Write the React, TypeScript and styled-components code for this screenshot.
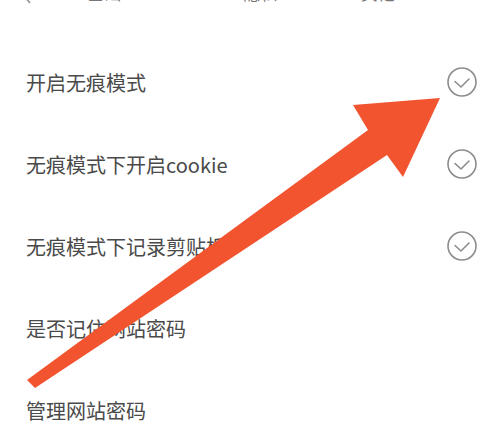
import React from 'react';
import styled, { createGlobalStyle } from 'styled-components';

const GlobalStyle = createGlobalStyle`
  html, body {
    margin: 0;
    padding: 0;
    background: #ffffff;
  }
  body {
    font-family: "Noto Sans CJK SC", "Noto Sans", sans-serif;
  }
`;

const tabs = [
  { label: '基础', offset: 55 },
  { label: '隐私', offset: 122 },
  { label: '其他', offset: 84 },
];

const rows = [
  { label: '开启无痕模式', checked: true },
  { label: '无痕模式下开启cookie', checked: true },
  { label: '无痕模式下记录剪贴板', checked: true },
  { label: '是否记住网站密码', checked: false },
  { label: '管理网站密码', checked: false },
];

function CheckCircle() {
  return (
    <svg width="30" height="30" viewBox="0 0 30 30">
      <circle cx="15" cy="15" r="14" fill="none" stroke="#8c8c8c" strokeWidth="1.6" />
      <path d="M8 14.5 L14 20 L22 12" fill="none" stroke="#8c8c8c" strokeWidth="1.6" strokeLinecap="round" strokeLinejoin="round" />
    </svg>
  );
}

function Arrow() {
  return (
    <ArrowLayer viewBox="0 0 493 442">
      <polygon
        points="27,380 368,130 353,105 440,98 403,177 387,155 35,388"
        fill="#f25430"
      />
    </ArrowLayer>
  );
}

function App() {
  return (
    <Page>
      <GlobalStyle />
      <TabBar>
        <Back>
          <svg width="10" height="16" viewBox="0 0 10 16">
            <path d="M8 1 L2 8 L8 15" fill="none" stroke="#9a9a9a" strokeWidth="1.8" />
          </svg>
        </Back>
        {tabs.map((t) => (
          <Tab key={t.label} $offset={t.offset}>{t.label}</Tab>
        ))}
      </TabBar>

      <List>
        {rows.map((r) => (
          <Row key={r.label}>
            <Label>{r.label}</Label>
            {r.checked && <CheckCircle />}
          </Row>
        ))}
      </List>

      <Arrow />
    </Page>
  );
}

const Page = styled.div`
  position: relative;
  width: 493px;
  height: 442px;
  overflow: hidden;
  background: #fff;
`;

const TabBar = styled.div`
  display: flex;
  align-items: flex-end;
  height: 48px;
  margin-top: -43px;
  padding-left: 22px;
`;

const Back = styled.div`
  width: 10px;
  height: 16px;
  margin-bottom: 4px;
`;

const Tab = styled.div<{ $offset: number }>`
  margin-left: ${(p) => p.$offset}px;
  font-size: 17px;
  line-height: 17px;
  margin-bottom: 4px;
  color: #777;
`;

const List = styled.div`
  display: flex;
  flex-direction: column;
  padding-top: 36px;
`;

const Row = styled.div`
  display: flex;
  align-items: center;
  justify-content: space-between;
  height: 82px;
  padding: 0 16px 0 26px;
`;

const Label = styled.span`
  font-size: 20px;
  color: #4a4a4a;
`;

const ArrowLayer = styled.svg`
  position: absolute;
  left: 0;
  top: 0;
  width: 493px;
  height: 442px;
  pointer-events: none;
`;

export default App;
